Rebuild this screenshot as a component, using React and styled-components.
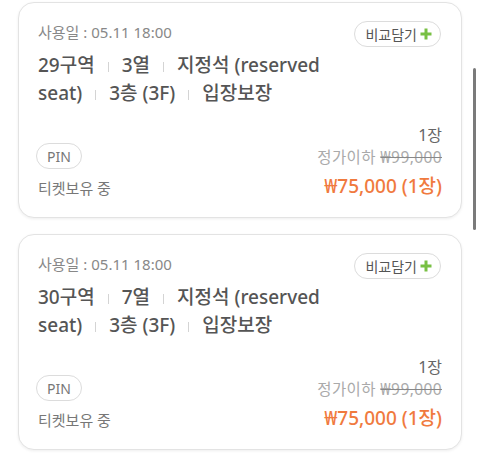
import React from 'react';
import styled, { createGlobalStyle } from 'styled-components';

const GlobalStyle = createGlobalStyle`
  html, body {
    margin: 0;
    padding: 0;
    background: #ffffff;
  }
  body {
    font-family: "Noto Sans", "Noto Sans CJK KR", sans-serif;
    color: #555;
  }
  * {
    box-sizing: border-box;
  }
`

const tickets = [
  { date: '05.11 18:00', parts: ['29구역', '3열', '지정석 (reserved seat)', '3층 (3F)', '입장보장'], count: '1장', regular: '₩99,000', price: '₩75,000 (1장)' },
  { date: '05.11 18:00', parts: ['30구역', '7열', '지정석 (reserved seat)', '3층 (3F)', '입장보장'], count: '1장', regular: '₩99,000', price: '₩75,000 (1장)' },
]

const ListPage = styled.div`
  display: flex;
  flex-direction: column;
  gap: 16px;
  padding: 2px 18px 12px 18px;
`

const Card = styled.div`
  border: 1px solid #e3e3e3;
  border-radius: 16px;
  background: #fff;
  box-shadow: 0 1px 3px rgba(0, 0, 0, 0.07);
  padding: 18px 19px 18px 19px;
  display: flex;
  flex-direction: column;
`

const TopRow = styled.div`
  display: flex;
  justify-content: space-between;
  align-items: flex-start;
  height: 26px;
`

const UseDate = styled.span`
  font-size: 15px;
  line-height: 22px;
  color: #888;
`

const CompareButton = styled.button`
  display: flex;
  align-items: center;
  gap: 2px;
  height: 26px;
  padding: 0 7px 0 10px;
  border: 1px solid #dcdcdc;
  border-radius: 13px;
  background: #fff;
  font-family: inherit;
  font-size: 14px;
  color: #555;
  margin-right: 1px;

  svg {
    display: block;
  }
`

const Title = styled.div`
  margin-top: 4px;
  max-width: 322px;
  font-size: 19px;
  line-height: 28px;
  font-weight: 500;
  color: #555;
`

const Word = styled.span`
  white-space: nowrap;
`

const Sep = styled.span`
  display: inline-block;
  width: 1px;
  height: 10px;
  background: #d4d4d4;
  margin: 0 13px;
  vertical-align: 0px;
`

const BottomRow = styled.div`
  margin-top: 17px;
  display: flex;
  justify-content: space-between;
  align-items: flex-end;
`

const HoldColumn = styled.div`
  display: flex;
  flex-direction: column;
  align-items: flex-start;
  gap: 8px;
`

const PinBadge = styled.span`
  display: flex;
  align-items: center;
  justify-content: center;
  height: 26px;
  width: 46px;
  margin-left: -2px;
  border: 1px solid #dcdcdc;
  border-radius: 13px;
  font-size: 14px;
  color: #777;
`

const HoldText = styled.span`
  font-size: 15px;
  line-height: 22px;
  color: #777;
`

const PriceColumn = styled.div`
  display: flex;
  flex-direction: column;
  align-items: flex-end;
  text-align: right;
`

const Count = styled.span`
  font-size: 16px;
  line-height: 22px;
  color: #666;
`

const Regular = styled.span`
  font-size: 15.5px;
  line-height: 23px;
  color: #aaa;
  letter-spacing: 0.4px;

  s {
    text-decoration-color: #888;
  }
`

const Price = styled.span`
  margin-top: 4px;
  font-size: 19px;
  line-height: 26px;
  font-weight: 500;
  color: #f07a3e;
`

const ScrollThumb = styled.div`
  position: fixed;
  top: 68px;
  right: 4px;
  width: 3px;
  height: 162px;
  border-radius: 2px;
  background: #7a7a7a;
`

function Plus() {
  return (
    <svg width="14" height="14" viewBox="0 0 14 14">
      <path d="M7 1.5v11M1.5 7h11" stroke="#78c043" strokeWidth="3" />
    </svg>
  )
}

function TicketCard({ ticket }) {
  return (
    <Card>
      <TopRow>
        <UseDate>사용일 : {ticket.date}</UseDate>
        <CompareButton>비교담기<Plus /></CompareButton>
      </TopRow>
      <Title>
        {ticket.parts.map((p, i) => (
          <React.Fragment key={i}>
            {i > 0 && <Sep />}
            {p.split(' ').map((w, j) => (
              <React.Fragment key={j}>
                {j > 0 && ' '}
                <Word>{w}</Word>
              </React.Fragment>
            ))}
          </React.Fragment>
        ))}
      </Title>
      <BottomRow>
        <HoldColumn>
          <PinBadge>PIN</PinBadge>
          <HoldText>티켓보유 중</HoldText>
        </HoldColumn>
        <PriceColumn>
          <Count>{ticket.count}</Count>
          <Regular>정가이하 <s>{ticket.regular}</s></Regular>
          <Price>{ticket.price}</Price>
        </PriceColumn>
      </BottomRow>
    </Card>
  )
}

export default function App() {
  return (
    <>
      <GlobalStyle />
      <ListPage>
        {tickets.map((t, i) => <TicketCard key={i} ticket={t} />)}
      </ListPage>
      <ScrollThumb />
    </>
  )
}
